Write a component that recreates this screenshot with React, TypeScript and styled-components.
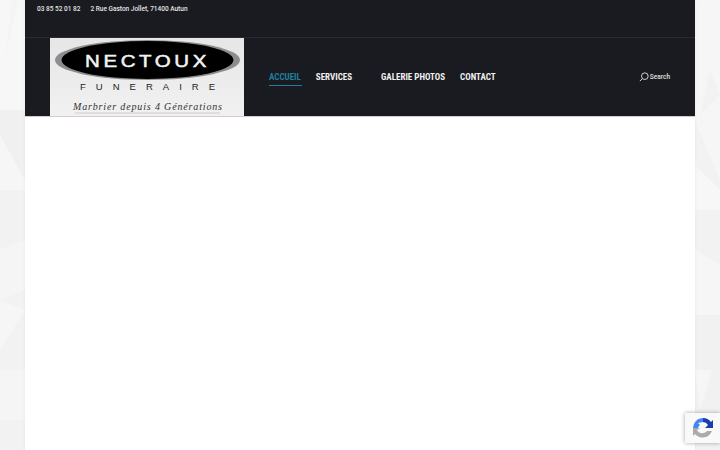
import React from 'react';
import styled, { createGlobalStyle } from 'styled-components';

const GlobalStyle = createGlobalStyle`
  html, body {
    margin: 0;
    padding: 0;
    height: 100%;
    overflow: hidden;
    background: #f2f2f2;
    font-family: Roboto, "Liberation Sans", sans-serif;
  }
`;

const Backdrop = styled.svg`
  position: fixed;
  inset: 0;
  width: 720px;
  height: 450px;
`;

const Page = styled.div`
  position: relative;
  width: 670px;
  height: 450px;
  margin: 0 auto;
  background: #fff;
  box-shadow: 0 0 3px rgba(0, 0, 0, 0.06);
`;

const Masthead = styled.header`
  background: #1a1b20;
  border-bottom: 1px solid #d9c9cc;
`;

const TopBar = styled.div`
  height: 38px;
  box-sizing: border-box;
  padding: 3px 12px 0;
  display: flex;
  gap: 10px;
  align-items: flex-start;
  border-bottom: 1px solid #2a2b30;
`;

const TopText = styled.span`
  font-size: 6.5px;
  line-height: 12px;
  font-weight: 500;
  color: #e4e4e4;
`;

const MainBar = styled.div`
  height: 78px;
  padding: 0 25px;
  display: flex;
  align-items: stretch;
`;

const LogoBox = styled.div`
  width: 194px;
  flex: none;
  background: linear-gradient(180deg, #e6e6e6, #f1f1f1);
`;

const LogoArt = styled.svg`
  display: block;
  width: 194px;
  height: 78px;
`;

const Nav = styled.nav`
  display: flex;
  align-items: center;
  margin-left: 25px;
  flex: 1;
`;

const NavItem = styled.a<{ $active?: boolean; $gap: number }>`
  position: relative;
  margin-right: ${(props) => props.$gap}px;
  font-size: 9px;
  font-weight: 700;
  font-stretch: 75%;
  line-height: 12px;
  white-space: nowrap;
  color: ${(props) => (props.$active ? '#1f7f9e' : '#f0f0f0')};

  &::after {
    content: '';
    display: ${(props) => (props.$active ? 'block' : 'none')};
    position: absolute;
    left: 0;
    right: -1px;
    top: 14px;
    height: 1px;
    background: #1f7f9e;
  }
`;

const SearchLink = styled.a`
  display: flex;
  align-items: center;
  gap: 1px;
  align-self: center;
  font-size: 6.5px;
  font-weight: 500;
  color: #e0e0e0;
`;

const RecaptchaBadge = styled.div`
  position: fixed;
  right: 0;
  top: 413px;
  width: 35px;
  height: 30px;
  background: #f9f9f9;
  box-shadow: 0 0 4px rgba(90, 90, 90, 0.55);
  display: flex;
  align-items: center;
  padding-left: 7px;
  box-sizing: border-box;
`;

const App = () => (
  <>
    <GlobalStyle />
    <Backdrop viewBox="0 0 720 450">
      <polygon points="0,0 25,0 25,110 0,110" fill="#f7f7f7" />
      <polygon points="12,0 18,0 5,60" fill="#f4f4f4" />
      <polygon points="0,110 25,110 25,190 0,190" fill="#f0f0f0" />
      <polygon points="0,135 25,180 25,190 0,190" fill="#f6f6f6" />
      <polygon points="0,250 25,240 25,290 0,300" fill="#f5f5f5" />
      <polygon points="0,300 25,310 0,350" fill="#f6f6f6" />
      <polygon points="0,370 25,370 25,420 0,420" fill="#f5f5f5" />
      <polygon points="695,0 720,0 720,180 695,120" fill="#f6f6f6" />
      <polygon points="710,70 720,95 700,115" fill="#f2f2f2" />
      <polygon points="695,165 720,190 720,210 695,210" fill="#f7f7f7" />
      <polygon points="695,250 720,265 720,315 695,315" fill="#f6f6f6" />
      <polygon points="695,315 720,315 720,410 695,410" fill="#f1f1f1" />
      <polygon points="695,370 712,370 700,410" fill="#f6f6f6" />
    </Backdrop>
    <Page>
      <Masthead>
        <TopBar>
          <TopText>03 85 52 01 82</TopText>
          <TopText>2 Rue Gaston Jollet, 71400 Autun</TopText>
        </TopBar>
        <MainBar>
          <LogoBox>
            <LogoArt viewBox="0 0 194 78">
              <ellipse cx="97.5" cy="22" rx="92.5" ry="20" fill="#8d8d8f" />
              <ellipse cx="97.5" cy="22" rx="86" ry="19" fill="#000" />
              <text x="35" y="29" textLength="125" lengthAdjust="spacingAndGlyphs" letterSpacing="3" stroke="#f2f2f2" strokeWidth="0.5" fontFamily="'Liberation Sans', sans-serif" fontSize="17" fill="#f2f2f2">NECTOUX</text>
              <text x="30" y="52" textLength="135" lengthAdjust="spacing" fontFamily="'Liberation Sans', sans-serif" fontSize="9.5" fill="#222">FUNERAIRE</text>
              <text x="23" y="72" textLength="149" lengthAdjust="spacing" fontFamily="'Liberation Serif', serif" fontStyle="italic" fontSize="10" fill="#333">Marbrier depuis 4 Générations</text>
              <line x1="25" y1="75" x2="170" y2="75" stroke="#aaa" strokeWidth="0.5" />
            </LogoArt>
          </LogoBox>
          <Nav>
            <NavItem $active $gap={15}>ACCUEIL</NavItem>
            <NavItem $gap={29}>SERVICES</NavItem>
            <NavItem $gap={15}>GALERIE PHOTOS</NavItem>
            <NavItem $gap={0}>CONTACT</NavItem>
          </Nav>
          <SearchLink>
            <svg width="10" height="10" viewBox="0 0 24 24" fill="none" stroke="#e0e0e0" strokeWidth="2.2">
              <circle cx="14" cy="10" r="8" />
              <line x1="8" y1="16" x2="2" y2="22" />
            </svg>
            Search
          </SearchLink>
        </MainBar>
      </Masthead>
    </Page>
    <RecaptchaBadge>
      <svg width="22" height="22" viewBox="0 0 22 22">
        <path d="M11 1a10 10 0 0 1 8 4l2-2v8h-8l3-3a6 6 0 0 0-5-3z" fill="#1c3aa9" />
        <path d="M11 1a10 10 0 0 0-9 6l-1 4h5a5 5 0 0 1 2-3l-2-2 5-1z" fill="#4285f4" />
        <path d="M1 11v8l2-2a10 10 0 0 0 17-3h-5a6 6 0 0 1-10-1l3-2z" fill="#ababab" />
      </svg>
    </RecaptchaBadge>
  </>
);

export default App;
